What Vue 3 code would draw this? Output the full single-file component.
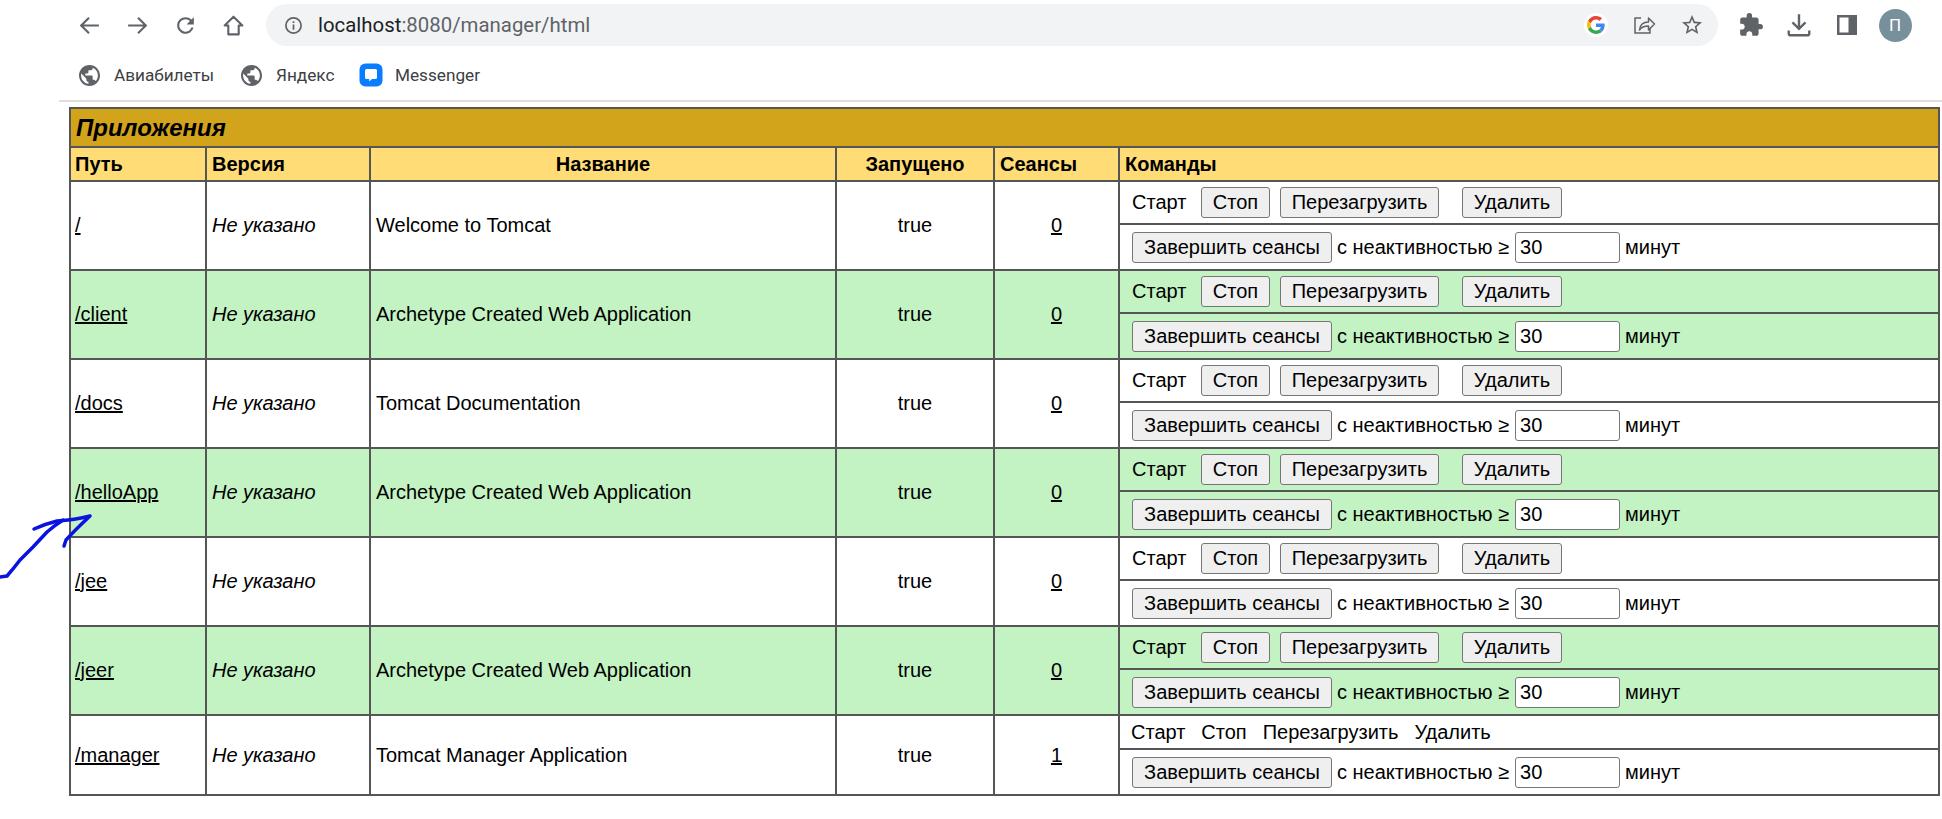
<template>
  <div class="page">
    <div class="toolbar">
      <button class="tool-btn" aria-label="Назад">
        <svg viewBox="0 0 24 24" width="25" height="25" fill="none" stroke="#5f6368" stroke-width="2"><path d="M21 12H4M11.5 4.5 4 12l7.5 7.5"/></svg>
      </button>
      <button class="tool-btn" aria-label="Вперед">
        <svg viewBox="0 0 24 24" width="25" height="25" fill="none" stroke="#5f6368" stroke-width="2"><path d="M3 12h17M12.500 4.500 20 12l-7.500 7.500"/></svg>
      </button>
      <button class="tool-btn" aria-label="Обновить">
        <svg viewBox="0 0 24 24" width="25" height="25" fill="#5f6368"><path d="M17.650 6.350A7.960 7.960 0 0 0 12 4a8 8 0 1 0 7.730 10h-2.080A6 6 0 1 1 12 6c1.660 0 3.140.69 4.220 1.780L13 11h7V4l-2.350 2.350z"/></svg>
      </button>
      <button class="tool-btn" aria-label="Домой">
        <svg viewBox="0 0 24 24" width="25" height="25" fill="none" stroke="#5f6368" stroke-width="2" stroke-linejoin="round"><path d="M12 3.500 3.500 12H7v8.500h10V12h3.500z"/></svg>
      </button>

      <div class="omnibox">
        <svg class="info-icon" viewBox="0 0 20 20" width="19" height="19" fill="none" stroke="#5f6368" stroke-width="1.800"><circle cx="10" cy="10" r="8"/><path d="M10 9v5.500M10 5.500v1.800"/></svg>
        <span class="url"><span class="host">localhost</span>:8080/manager/html</span>
        <span class="omni-icon">
          <span class="g-badge">
            <svg viewBox="0 0 48 48" width="18" height="18">
              <path fill="#EA4335" d="M24 9.500c3.540 0 6.710 1.220 9.210 3.600l6.850-6.850C35.900 2.380 30.470 0 24 0 14.620 0 6.510 5.380 2.560 13.220l7.980 6.190C12.430 13.720 17.740 9.500 24 9.500z"/>
              <path fill="#4285F4" d="M46.980 24.550c0-1.570-.15-3.090-.38-4.550H24v9.020h12.940c-.58 2.960-2.260 5.480-4.780 7.180l7.730 6c4.510-4.180 7.090-10.360 7.090-17.650z"/>
              <path fill="#FBBC05" d="M10.530 28.590c-.48-1.450-.76-2.990-.76-4.590s.27-3.140.76-4.590l-7.980-6.190C.92 16.460 0 20.120 0 24c0 3.880.92 7.540 2.560 10.780l7.970-6.190z"/>
              <path fill="#34A853" d="M24 48c6.480 0 11.930-2.130 15.890-5.810l-7.730-6c-2.150 1.450-4.920 2.300-8.160 2.300-6.260 0-11.570-4.220-13.470-9.910l-7.980 6.190C6.510 42.620 14.620 48 24 48z"/>
            </svg>
          </span>
        </span>
        <span class="omni-icon">
          <svg viewBox="0 0 24 24" width="24" height="24" fill="none" stroke="#5f6368" stroke-width="1.500"><path d="M9 5H3v15h15v-5"/><path d="M7.500 17c.5-5 4-8 9-8V5l6 6-6 6v-4c-4 0-7 1-9 4z" stroke-linejoin="round"/></svg>
        </span>
        <span class="omni-icon">
          <svg viewBox="0 0 24 24" width="24" height="24" fill="#5f6368"><path d="M22 9.240l-7.190-.62L12 2 9.190 8.630 2 9.240l5.460 4.730L5.820 21 12 17.270 18.180 21l-1.630-7.030L22 9.240zM12 15.400l-3.760 2.270 1-4.280-3.320-2.880 4.380-.38L12 6.100l1.710 4.040 4.380.38-3.320 2.880 1 4.280L12 15.400z"/></svg>
        </span>
      </div>

      <div class="tool-right">
        <button class="tool-btn" aria-label="Расширения">
          <svg viewBox="0 0 24 24" width="26" height="26" fill="#5f6368"><path d="M20.500 11H19V7c0-1.100-.9-2-2-2h-4V3.500a2.500 2.500 0 0 0-5 0V5H4c-1.100 0-1.990.9-1.990 2v3.800H3.500c1.490 0 2.700 1.210 2.700 2.700s-1.210 2.700-2.700 2.700H2V20c0 1.100.9 2 2 2h3.800v-1.500c0-1.490 1.210-2.700 2.700-2.700 1.490 0 2.700 1.210 2.700 2.700V22H17c1.100 0 2-.9 2-2v-4h1.500a2.500 2.500 0 0 0 0-5z"/></svg>
        </button>
        <button class="tool-btn" aria-label="Загрузки">
          <svg viewBox="0 0 24 24" width="26" height="26" fill="none" stroke="#5f6368" stroke-width="2.200"><path d="M12 2v13M6 9.500l6 6 6-6"/><path d="M2.500 17v2.500a2 2 0 0 0 2 2h15a2 2 0 0 0 2-2V17"/></svg>
        </button>
        <button class="tool-btn" aria-label="Боковая панель">
          <svg viewBox="0 0 24 24" width="24" height="24"><path fill="#5f6368" d="M2 2h20v20H2z"/><path fill="#fff" d="M4.500 4.500h9v15h-9z"/></svg>
        </button>
        <div class="tool-btn">
          <span class="avatar">П</span>
        </div>
      </div>
    </div>

    <div class="bookmarks">
      <span v-for="b in bookmarks" :key="b.name" class="bookmark">
        <svg v-if="b.kind === 'globe'" viewBox="2 2 20 20" width="21" height="21" fill="#5f6368"><path d="M12 2C6.480 2 2 6.480 2 12s4.480 10 10 10 10-4.480 10-10S17.520 2 12 2zm-1 17.930c-3.950-.49-7-3.850-7-7.930 0-.62.08-1.210.21-1.790L9 15v1c0 1.100.9 2 2 2v1.930zm6.900-2.540c-.26-.81-1-1.390-1.900-1.390h-1v-3c0-.55-.45-1-1-1H8v-2h2c.55 0 1-.45 1-1V7h2c1.100 0 2-.9 2-2v-.41c2.930 1.190 5 4.060 5 7.410 0 2.080-.8 3.970-2.100 5.390z"/></svg>
        <svg v-else viewBox="0 0 24 24" width="24" height="24"><rect x="0.500" y="0.500" width="23" height="23" rx="6" fill="#0a7cff"/><path fill="#fff" d="M7.500 6h9A1.500 1.500 0 0 1 18 7.500v7a1.500 1.500 0 0 1-1.500 1.500H13l-2.800 2.500V16H7.500A1.500 1.500 0 0 1 6 14.500v-7A1.500 1.500 0 0 1 7.500 6z"/></svg>
        <span class="bookmark-name">{{ b.name }}</span>
      </span>
    </div>

    <div class="divider"></div>

    <div class="content">
      <table class="apps">
        <colgroup>
          <col class="c-path" />
          <col class="c-version" />
          <col class="c-name" />
          <col class="c-running" />
          <col class="c-sessions" />
          <col />
        </colgroup>
        <tbody>
          <tr class="title-row">
            <td colspan="6">Приложения</td>
          </tr>
          <tr class="head-row">
            <td>Путь</td>
            <td>Версия</td>
            <td class="center">Название</td>
            <td class="center">Запущено</td>
            <td>Сеансы</td>
            <td>Команды</td>
          </tr>
          <template v-for="(app, i) in apps" :key="app.path">
            <tr :class="{ odd: i % 2 === 1 }">
              <td rowspan="2"><a href="#">{{ app.path }}</a></td>
              <td rowspan="2"><em>Не указано</em></td>
              <td rowspan="2">{{ app.name }}</td>
              <td rowspan="2" class="center">true</td>
              <td rowspan="2" class="center"><a href="#">{{ app.sessions }}</a></td>
              <td class="cmd-cell" :class="{ plain: app.locked }">
                <div v-if="app.locked" class="cmds locked">
                  <span>Старт</span>
                  <span>Стоп</span>
                  <span>Перезагрузить</span>
                  <span>Удалить</span>
                </div>
                <div v-else class="cmds">
                  <span class="start">Старт</span>
                  <button class="btn stop">Стоп</button>
                  <button class="btn reload">Перезагрузить</button>
                  <button class="btn remove">Удалить</button>
                </div>
              </td>
            </tr>
            <tr :class="{ odd: i % 2 === 1 }">
              <td class="cmd-cell expire-cell">
                <div class="cmds">
                  <button class="btn expire">Завершить сеансы</button>
                  <span class="idle">с неактивностью ≥</span>
                  <input class="idle-input" type="text" value="30" />
                  <span class="idle">минут</span>
                </div>
              </td>
            </tr>
          </template>
        </tbody>
      </table>
    </div>

    <svg class="arrow" viewBox="0 0 100 90" width="100" height="90" fill="none" stroke="#0a14e0" stroke-width="3.500" stroke-linecap="round" stroke-linejoin="round">
      <path d="M0 77 7 76Q14 68 20 60L33 47 47 32Q55 25 63 20"/>
      <path d="M34 29Q45 24 57 21 75 20 90 16 75 30 66 40L64 46"/>
    </svg>
  </div>
</template>

<script setup>
const bookmarks = [
  { name: 'Авиабилеты', kind: 'globe' },
  { name: 'Яндекс', kind: 'globe' },
  { name: 'Messenger', kind: 'chat' }
]

const apps = [
  { path: '/', name: 'Welcome to Tomcat', sessions: 0 },
  { path: '/client', name: 'Archetype Created Web Application', sessions: 0 },
  { path: '/docs', name: 'Tomcat Documentation', sessions: 0 },
  { path: '/helloApp', name: 'Archetype Created Web Application', sessions: 0 },
  { path: '/jee', name: '', sessions: 0 },
  { path: '/jeer', name: 'Archetype Created Web Application', sessions: 0 },
  { path: '/manager', name: 'Tomcat Manager Application', sessions: 1, locked: true }
]
</script>

<style>
html,
body {
  margin: 0;
  background: #fff;
}
</style>

<style scoped>
.page {
  position: relative;
  width: 1942px;
  height: 819px;
  overflow: hidden;
  background: #fff;
  font-family: "Liberation Sans", Arial, sans-serif;
  color: #000;
}

.toolbar {
  display: flex;
  align-items: center;
  height: 50px;
  padding: 0 23px 0 65px;
  box-sizing: border-box;
}

.tool-btn {
  flex: none;
  display: flex;
  align-items: center;
  justify-content: center;
  width: 48px;
  height: 42px;
  padding: 0;
  border: none;
  background: none;
}

.omnibox {
  flex: 1;
  display: flex;
  align-items: center;
  height: 42px;
  margin-left: 9px;
  padding: 0 2px 0 18px;
  border-radius: 21px;
  background: #f1f3f4;
}

.info-icon {
  flex: none;
}

.url {
  flex: 1;
  margin-left: 15px;
  font-family: Roboto, sans-serif;
  font-size: 20.400px;
  color: #5f6368;
}

.host {
  color: #202124;
}

.omni-icon {
  flex: none;
  display: flex;
  align-items: center;
  justify-content: center;
  width: 48px;
  height: 42px;
}

.g-badge {
  display: flex;
  align-items: center;
  justify-content: center;
  width: 24px;
  height: 24px;
  border-radius: 50%;
  background: #fff;
}

.tool-right {
  display: flex;
  align-items: center;
  margin-left: 9px;
}

.avatar {
  display: flex;
  align-items: center;
  justify-content: center;
  width: 33px;
  height: 33px;
  border-radius: 50%;
  background: #78909c;
  color: #fff;
  font-family: Roboto, sans-serif;
  font-size: 17px;
}

.bookmarks {
  display: flex;
  align-items: center;
  height: 50px;
  padding: 0 0 0 79px;
  box-sizing: border-box;
}

.bookmark {
  display: flex;
  align-items: center;
  gap: 14px;
}

.bookmark:nth-child(1) {
  width: 162px;
}

.bookmark:nth-child(2) {
  width: 118px;
}

.bookmark:nth-child(3) {
  gap: 12px;
}

.bookmark-name {
  font-family: Roboto, sans-serif;
  font-size: 17.200px;
  color: #3c4043;
}

.divider {
  height: 2px;
  margin-left: 59px;
  background: #dedede;
}

.content {
  padding: 5px 0 0 69px;
}

.apps {
  width: 1871px;
  table-layout: fixed;
  border-collapse: collapse;
  font-size: 20px;
  line-height: 23px;
}

.apps td {
  padding: 0 5px;
  border: 2px solid #555;
  box-sizing: border-box;
}

.apps td:first-child {
  padding-left: 4px;
}

.c-path {
  width: 136px;
}

.c-version {
  width: 164px;
}

.c-name {
  width: 466px;
}

.c-running {
  width: 158px;
}

.c-sessions {
  width: 125px;
}

.apps .title-row td {
  height: 39px;
  padding-left: 5px;
  background: #d2a41c;
  font-size: 24px;
  font-weight: bold;
  font-style: italic;
}

.head-row td {
  height: 34px;
  background: #ffdc75;
  font-weight: bold;
}

.center {
  text-align: center;
}

.odd td {
  background: #c3f3c3;
}

.apps a {
  color: #000;
}

.apps td.cmd-cell {
  height: 43px;
  padding: 0 0 0 12px;
}

.apps td.cmd-cell.plain {
  height: 34px;
  padding-left: 11px;
}

.apps td.cmd-cell.expire-cell {
  height: 46px;
}

.cmds {
  display: flex;
  align-items: center;
}

.start {
  width: 69px;
}

.btn {
  box-sizing: border-box;
  height: 31px;
  padding: 0;
  border: 1px solid #767676;
  border-radius: 3px;
  background: #efefef;
  color: #000;
  font-family: "Liberation Sans", Arial, sans-serif;
  font-size: 20px;
}

.stop {
  width: 69px;
}

.reload {
  width: 159px;
  margin-left: 10px;
}

.remove {
  width: 100px;
  margin-left: 23px;
}

.expire {
  width: 200px;
}

.idle {
  margin-left: 5px;
}

.idle-input {
  box-sizing: border-box;
  width: 105px;
  height: 31px;
  margin-left: 6px;
  padding: 0 4px;
  border: 1px solid #767676;
  border-radius: 3px;
  background: #fff;
  font-family: "Liberation Sans", Arial, sans-serif;
  font-size: 20px;
}

.locked {
  gap: 16px;
}

.arrow {
  position: absolute;
  left: 0;
  top: 500px;
}
</style>
